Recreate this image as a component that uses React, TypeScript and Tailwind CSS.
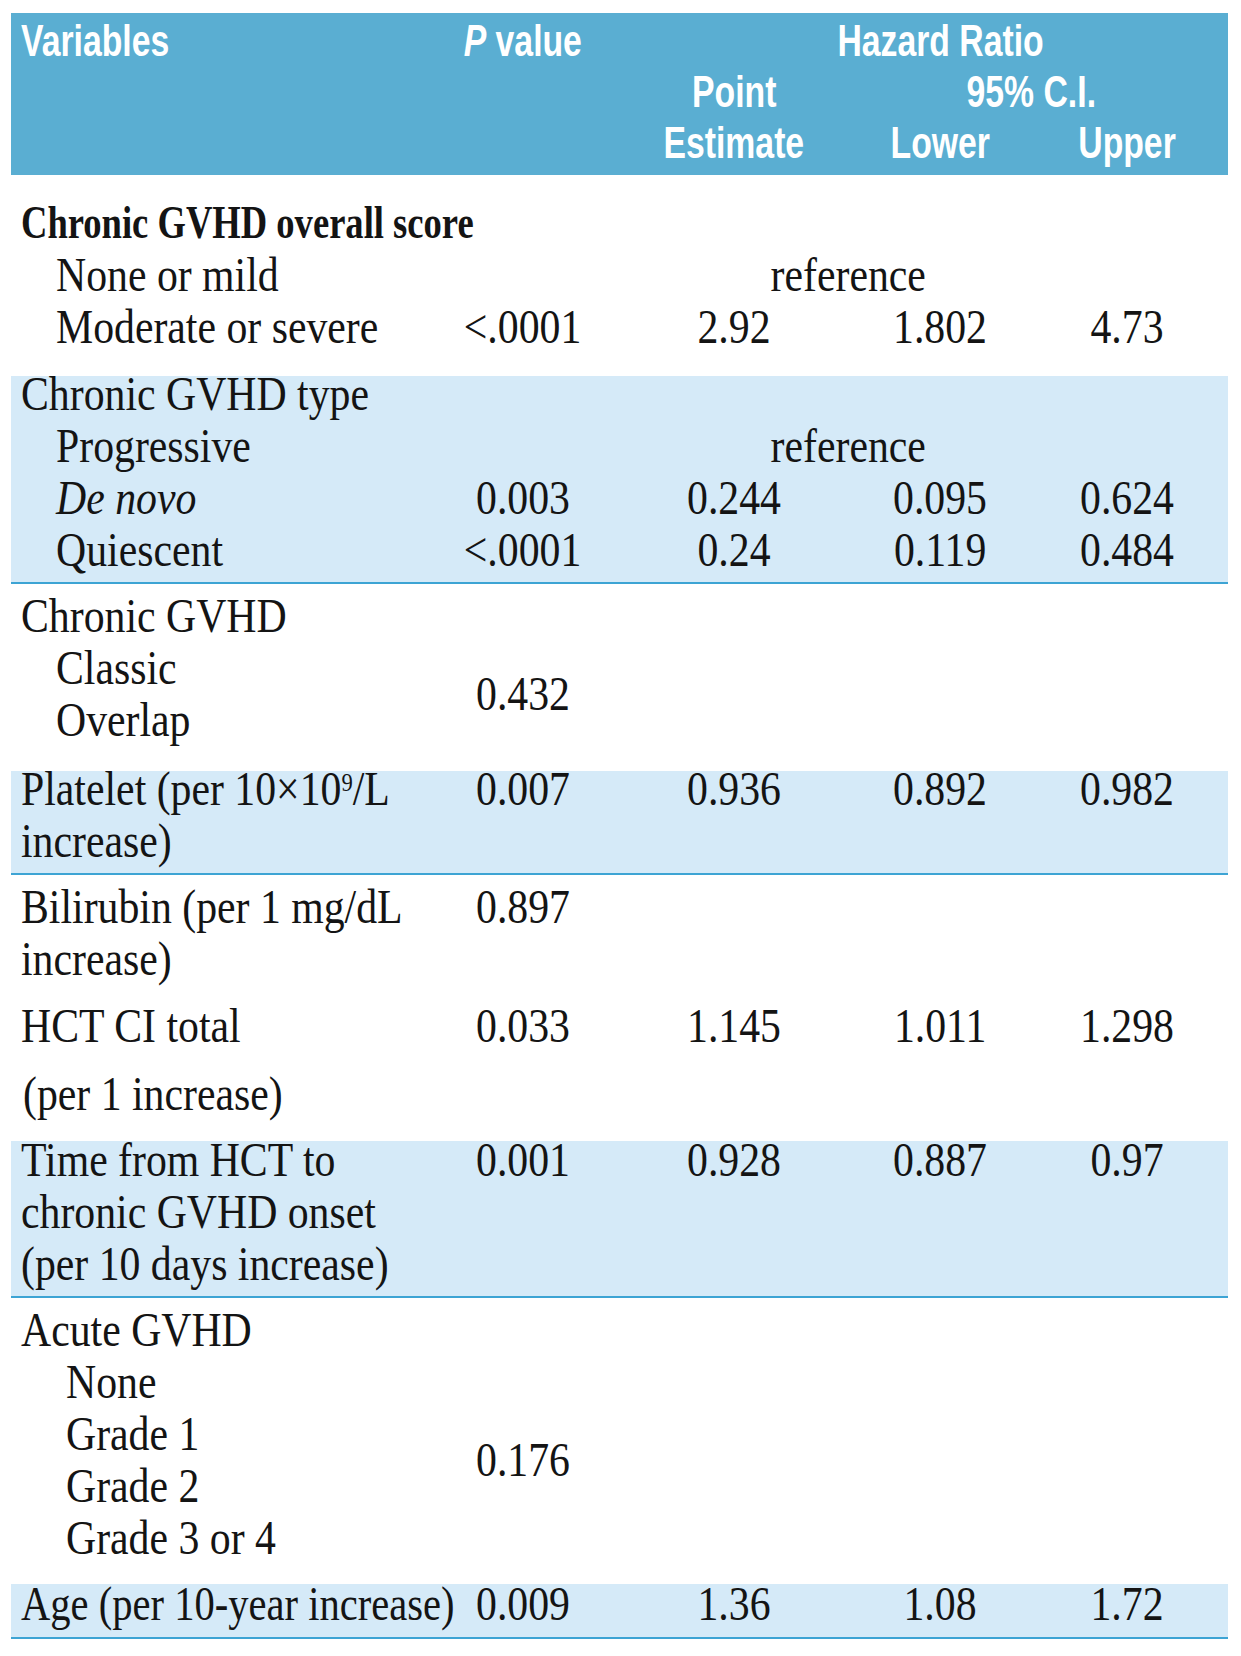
import React from "react";

const COLS = "grid grid-cols-[447px_130px_292px_120px_228px]";
const CELL = "leading-[52px] whitespace-nowrap";
const CC = "flex justify-center";
const HC = "inline-block scale-x-[0.75] origin-center whitespace-nowrap";
const BL0 = "inline-block -translate-y-[3px] origin-left whitespace-nowrap";
const BL = `${BL0} scale-x-[0.87]`;
const BC = "inline-block scale-x-[0.87] -translate-y-[3px] origin-center whitespace-nowrap";

type RowProps = {
  label?: React.ReactNode;
  indent?: string;
  p?: string;
  pe?: string;
  lo?: string;
  up?: string;
  cls?: string;
  labelCls?: string;
};

function V({ v }: { v?: string }) {
  return v ? <span className={BC}>{v}</span> : null;
}

function R({
  label,
  indent = "pl-[10px]",
  p,
  pe,
  lo,
  up,
  cls = "",
  labelCls = "scale-x-[0.87]",
}: RowProps) {
  return (
    <div className={`${COLS} ${cls}`}>
      <div className={`${CELL} ${indent}`}>
        {label ? <span className={`${BL0} ${labelCls}`}>{label}</span> : null}
      </div>
      <div className={`${CELL} ${CC}`}>
        <V v={p} />
      </div>
      <div className={`${CELL} ${CC}`}>
        <V v={pe} />
      </div>
      <div className={`${CELL} ${CC}`}>
        <V v={lo} />
      </div>
      <div className={`${CELL} ${CC} pl-[26px]`}>
        <V v={up} />
      </div>
    </div>
  );
}

function RefRow({ label, indent = "pl-[45px]" }: { label: string; indent?: string }) {
  return (
    <div className={COLS}>
      <div className={`${CELL} ${indent}`}>
        <span className={BL}>{label}</span>
      </div>
      <div className={CELL}></div>
      <div className={`${CELL} ${CC} col-span-2 pl-[108px]`}>
        <span className={BC}>reference</span>
      </div>
      <div className={CELL}></div>
    </div>
  );
}

function Lbl({ children, cls }: { children: React.ReactNode; cls: string }) {
  return (
    <div className={`${CELL} ${cls}`}>
      <span className={BL}>{children}</span>
    </div>
  );
}

function H({ children, cls = "" }: { children?: React.ReactNode; cls?: string }) {
  return (
    <div className={`leading-[51px] ${CC} ${cls}`}>
      {children ? <span className={HC}>{children}</span> : null}
    </div>
  );
}

export default function App() {
  return (
    <div className="bg-white min-h-[1656px] pt-[13px] pl-[11px]">
      <div className="w-[1217px] text-[48px] text-[#141414] font-['Liberation_Serif','Times_New_Roman',serif]">
        {/* Header */}
        <div
          className={`${COLS} bg-[#5aaed2] text-white font-bold text-[45px] pt-[2px] pb-[7px] font-['Liberation_Sans','Arial',sans-serif]`}
        >
          <div className="leading-[51px] pl-[10px]">
            <span className="inline-block scale-x-[0.75] origin-left whitespace-nowrap">Variables</span>
          </div>
          <H>
            <span className="italic">P</span> value
          </H>
          <H cls="col-span-3 pl-[66px]">Hazard Ratio</H>

          <H />
          <H />
          <H>Point</H>
          <H cls="col-span-2 pr-[46px]">95% C.I.</H>

          <H />
          <H />
          <H>Estimate</H>
          <H>Lower</H>
          <H cls="pl-[26px]">Upper</H>
        </div>

        {/* Section A */}
        <div className="flex flex-col pt-[24px] pb-[20px]">
          <R label="Chronic GVHD overall score" labelCls="font-bold text-[46px] scale-x-[0.795]" />
          <RefRow label="None or mild" />
          <R indent="pl-[45px]" label="Moderate or severe" p="<.0001" pe="2.92" lo="1.802" up="4.73" />
        </div>

        {/* Band 1 */}
        <div className="flex flex-col bg-[#d5eaf8] border-b-2 border-[#3da4d4] pb-[3px]">
          <div className="flex flex-col -mt-[5px]">
            <R label="Chronic GVHD type" />
            <RefRow label="Progressive" />
            <R
              indent="pl-[45px]"
              label={<span className="italic">De novo</span>}
              p="0.003"
              pe="0.244"
              lo="0.095"
              up="0.624"
            />
            <R indent="pl-[45px]" label="Quiescent" p="<.0001" pe="0.24" lo="0.119" up="0.484" />
          </div>
        </div>

        {/* Section C */}
        <div className={`${COLS} grid-rows-[52px_52px_52px] pt-[9px] pb-[22px]`}>
          <Lbl cls="pl-[10px] col-start-1 row-start-1">Chronic GVHD</Lbl>
          <Lbl cls="pl-[45px] col-start-1 row-start-2">Classic</Lbl>
          <Lbl cls="pl-[45px] col-start-1 row-start-3">Overlap</Lbl>
          <div className="col-start-2 row-start-2 row-span-2 flex items-center justify-center leading-[52px]">
            <span className={BC}>0.432</span>
          </div>
        </div>

        {/* Band 2 */}
        <div className="flex flex-col bg-[#d5eaf8] border-b-2 border-[#3da4d4] pb-[3px]">
          <div className="flex flex-col -mt-[5px]">
            <R
              label={
                <>
                  Platelet (per 10×10
                  <span className="inline-block align-top text-[26px] leading-[40px]">9</span>
                  /L
                </>
              }
              p="0.007"
              pe="0.936"
              lo="0.892"
              up="0.982"
            />
            <R label="increase)" />
          </div>
        </div>

        {/* Section E */}
        <div className="flex flex-col pt-[9px] pb-[18px]">
          <R label="Bilirubin (per 1 mg/dL" p="0.897" />
          <R label="increase)" />
          <R cls="mt-[15px]" label="HCT CI total" p="0.033" pe="1.145" lo="1.011" up="1.298" />
          <R cls="mt-[16px]" indent="pl-[12px]" label="(per 1 increase)" />
        </div>

        {/* Band 3 */}
        <div className="flex flex-col bg-[#d5eaf8] border-b-2 border-[#3da4d4] pb-[3px]">
          <div className="flex flex-col -mt-[4px]">
            <R label="Time from HCT to" p="0.001" pe="0.928" lo="0.887" up="0.97" />
            <R label="chronic GVHD onset" />
            <R label="(per 10 days increase)" />
          </div>
        </div>

        {/* Section G */}
        <div className={`${COLS} grid-rows-[52px_52px_52px_52px_52px] pt-[9px] pb-[17px]`}>
          <Lbl cls="pl-[10px] col-start-1 row-start-1">Acute GVHD</Lbl>
          <Lbl cls="pl-[55px] col-start-1 row-start-2">None</Lbl>
          <Lbl cls="pl-[55px] col-start-1 row-start-3">Grade 1</Lbl>
          <Lbl cls="pl-[55px] col-start-1 row-start-4">Grade 2</Lbl>
          <Lbl cls="pl-[55px] col-start-1 row-start-5">Grade 3 or 4</Lbl>
          <div className="col-start-2 row-start-2 row-span-4 flex items-center justify-center leading-[52px]">
            <span className={BC}>0.176</span>
          </div>
        </div>

        {/* Band 4 */}
        <div className="flex flex-col bg-[#d5eaf8] border-b-2 border-[#3da4d4] pb-[4px]">
          <div className="flex flex-col -mt-[3px]">
            <R
              label="Age (per 10-year increase)"
              labelCls="scale-x-[0.845]"
              p="0.009"
              pe="1.36"
              lo="1.08"
              up="1.72"
            />
          </div>
        </div>
      </div>
    </div>
  );
}
